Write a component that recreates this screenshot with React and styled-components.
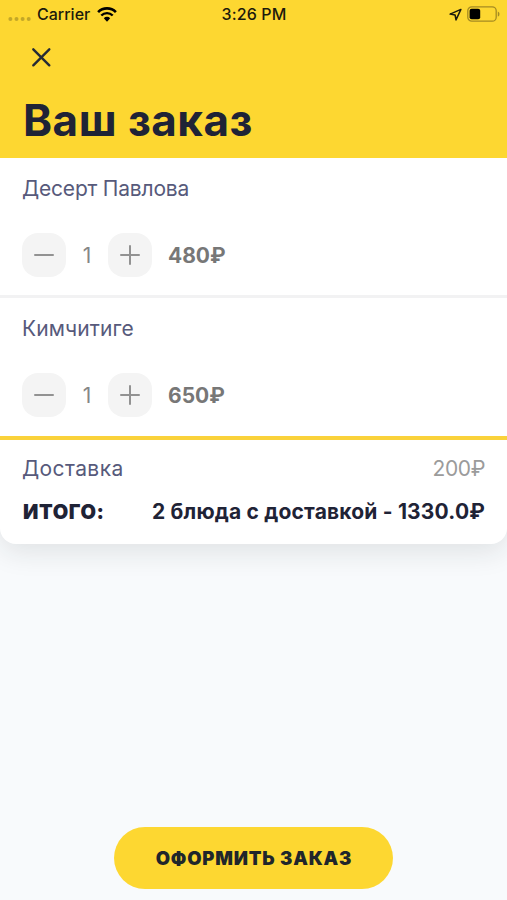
import styled, { createGlobalStyle } from 'styled-components'

const GlobalStyle = createGlobalStyle`
  * {
    box-sizing: border-box;
  }

  body {
    margin: 0;
    font-family: Inter, 'Liberation Sans', sans-serif;
    color: #1f2336;
    background: #f8fafc;
  }

  button {
    padding: 0;
    border: none;
    font-family: inherit;
    color: inherit;
    cursor: pointer;
  }
`

const Screen = styled.div`
  display: flex;
  flex-direction: column;
  width: 507px;
  height: 900px;
  overflow: hidden;
`

const Header = styled.header`
  position: relative;
  z-index: 1;
  flex: none;
  height: 158px;
  background: #fdd731;
`

const StatusBar = styled.div`
  display: grid;
  grid-template-columns: 1fr auto 1fr;
  align-items: center;
  height: 28px;
  padding: 0 7px 0 8px;
  font-size: 16px;
  font-weight: 500;
  line-height: 28px;
  color: #1c1a0c;
`

const Clock = styled.div`
  letter-spacing: 0.15px;
`

const Carrier = styled.div`
  display: flex;
  align-items: center;

  span {
    margin: 0 7px 0 6px;
  }
`

const Indicators = styled.div`
  display: flex;
  align-items: center;
  justify-content: flex-end;
  gap: 5px;
`

const CloseButton = styled.button`
  display: block;
  width: 20px;
  height: 20px;
  margin: 19px 0 0 31px;
  background: none;

  svg {
    display: block;
  }
`

const Title = styled.h1`
  margin: 25px 0 0 23px;
  font-size: 44px;
  font-weight: 700;
  line-height: 56px;
  letter-spacing: 0.5px;
`

const Card = styled.main`
  flex: none;
  background: #fff;
  border-radius: 0 0 16px 16px;
  box-shadow: 0 8px 28px rgba(30, 35, 40, 0.11);
`

const Item = styled.section`
  height: ${(props) => (props.$last ? 142 : 140)}px;
  padding: 17px 22px 0;
  border-bottom: ${(props) =>
    props.$last ? '4px solid #fad23a' : '3px solid #f2f2f3'};
`

const Name = styled.div`
  font-size: 21px;
  line-height: 28px;
  letter-spacing: ${(props) => props.$spacing ?? 0}px;
  color: #575a7b;
`

const Controls = styled.div`
  display: flex;
  align-items: center;
  height: 44px;
  margin-top: 30px;
`

const StepButton = styled.button`
  width: 44px;
  height: 44px;
  border-radius: 16px;
  background: #f4f4f4;

  svg {
    display: block;
    margin: auto;
  }
`

const Count = styled.span`
  width: 42px;
  font-size: 21px;
  text-align: center;
  color: #868686;
`

const Price = styled.span`
  margin-left: 16px;
  font-size: 21px;
  font-weight: 700;
  color: #777;
`

const Summary = styled.section`
  height: 104px;
  padding: 8px 22px 0;
`

const SummaryRow = styled.div`
  display: flex;
  align-items: baseline;
  justify-content: space-between;
  height: 43px;
  line-height: 42px;
`

const DeliveryLabel = styled(Name)`
  line-height: inherit;
`

const DeliveryPrice = styled.span`
  font-size: 21px;
  letter-spacing: -0.4px;
  color: #9b9b9b;
`

const TotalLabel = styled.span`
  margin-left: 1px;
  font-size: 20px;
  font-weight: 900;
  letter-spacing: 0.6px;
`

const TotalValue = styled.span`
  font-size: 21px;
  font-weight: 650;
  letter-spacing: 0.18px;
`

const OrderButton = styled.button`
  flex: none;
  width: 279px;
  height: 62px;
  margin: auto auto 11px 114px;
  padding-left: 1px;
  border-radius: 31px;
  background: #fdd731;
  font-size: 18.5px;
  font-weight: 900;
  letter-spacing: 0.8px;
  color: #20262b;
`

const items = [
  { name: 'Десерт Павлова', count: 1, price: 480, spacing: -0.2 },
  { name: 'Кимчитиге', count: 1, price: 650, spacing: 0.1 },
]

function SignalDots() {
  return (
    <svg width="23" height="14" viewBox="0 0 23 14" fill="#1c1a0c" opacity="0.25">
      <circle cx="2.4" cy="12" r="2" />
      <circle cx="8.5" cy="12" r="2" />
      <circle cx="14.6" cy="12" r="2" />
      <circle cx="20.7" cy="12" r="2" />
    </svg>
  )
}

function WifiIcon() {
  return (
    <svg width="20" height="15" viewBox="0 0 20 15" fill="none">
      <path d="M1.1 5.1a12.6 12.6 0 0 1 17.8 0" stroke="#000" strokeWidth="2.6" />
      <path d="M4.3 8.5a8 8 0 0 1 11.4 0" stroke="#000" strokeWidth="2.4" />
      <path d="M6.8 11.2a4.5 4.5 0 0 1 6.4 0L10 14.7z" fill="#000" />
    </svg>
  )
}

function LocationIcon() {
  return (
    <svg width="13" height="13" viewBox="0 0 13 13" fill="none">
      <path
        d="M11.9 1.4 1.1 6.1l5 .9.9 4.9z"
        stroke="#1c1a0c"
        strokeWidth="1.5"
        strokeLinejoin="round"
      />
    </svg>
  )
}

function BatteryIcon() {
  return (
    <svg width="33" height="16" viewBox="0 0 33 16">
      <rect
        x="0.8"
        y="0.8"
        width="28.4"
        height="14.4"
        rx="4"
        fill="none"
        stroke="#a58b22"
        strokeWidth="1.3"
      />
      <rect x="2.6" y="2.8" width="10.6" height="10.4" rx="2" fill="#000" />
      <path d="M30.8 5.4c2.2.8 2.2 4.4 0 5.2z" fill="#a58b22" />
    </svg>
  )
}

function StepIcon({ plus }) {
  return (
    <svg width="20" height="20" viewBox="0 0 20 20" stroke="#929292" strokeWidth="2">
      <path d="M1 10h18" strokeLinecap="round" />
      {plus && <path d="M10 1v18" strokeLinecap="round" />}
    </svg>
  )
}

function OrderItem({ item, last }) {
  return (
    <Item $last={last}>
      <Name $spacing={item.spacing}>{item.name}</Name>
      <Controls>
        <StepButton aria-label="Меньше">
          <StepIcon />
        </StepButton>
        <Count>{item.count}</Count>
        <StepButton aria-label="Больше">
          <StepIcon plus />
        </StepButton>
        <Price>{item.price}₽</Price>
      </Controls>
    </Item>
  )
}

function App() {
  return (
    <>
      <GlobalStyle />
      <Screen>
        <Header>
          <StatusBar>
            <Carrier>
              <SignalDots />
              <span>Carrier</span>
              <WifiIcon />
            </Carrier>
            <Clock>3:26 PM</Clock>
            <Indicators>
              <LocationIcon />
              <BatteryIcon />
            </Indicators>
          </StatusBar>
          <CloseButton aria-label="Закрыть">
            <svg width="20" height="20" viewBox="0 0 20 20" fill="none">
              <path
                d="M2.3 2.3l16 16M18.3 2.3l-16 16"
                stroke="#252a35"
                strokeWidth="2.4"
                strokeLinecap="round"
              />
            </svg>
          </CloseButton>
          <Title>Ваш заказ</Title>
        </Header>
        <Card>
          {items.map((item, i) => (
            <OrderItem
              key={item.name}
              item={item}
              last={i === items.length - 1}
            />
          ))}
          <Summary>
            <SummaryRow>
              <DeliveryLabel $spacing={0.4}>Доставка</DeliveryLabel>
              <DeliveryPrice>200₽</DeliveryPrice>
            </SummaryRow>
            <SummaryRow>
              <TotalLabel>ИТОГО:</TotalLabel>
              <TotalValue>2 блюда с доставкой - 1330.0₽</TotalValue>
            </SummaryRow>
          </Summary>
        </Card>
        <OrderButton>ОФОРМИТЬ ЗАКАЗ</OrderButton>
      </Screen>
    </>
  )
}

export default App
